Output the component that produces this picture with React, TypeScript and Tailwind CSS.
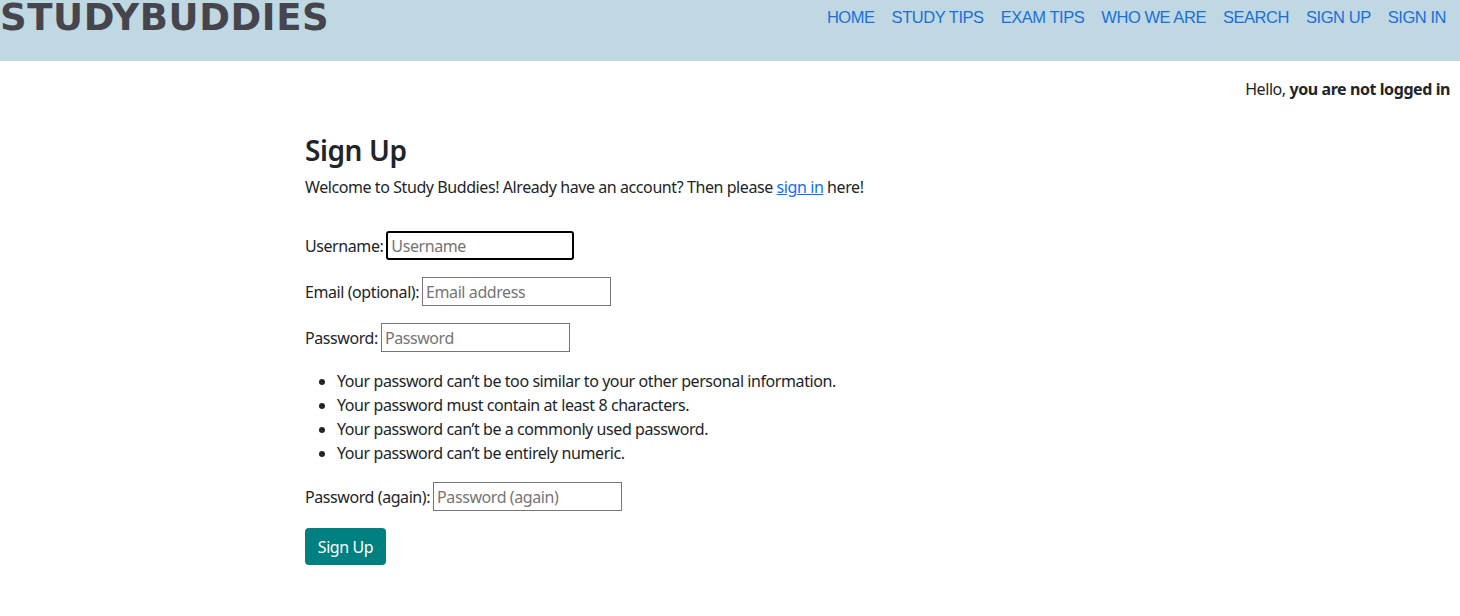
import React from 'react';

const navLinks = ['HOME', 'STUDY TIPS', 'EXAM TIPS', 'WHO WE ARE', 'SEARCH', 'SIGN UP', 'SIGN IN'];

const rules = [
  'Your password can’t be too similar to your other personal information.',
  'Your password must contain at least 8 characters.',
  'Your password can’t be a commonly used password.',
  'Your password can’t be entirely numeric.',
];

const Field: React.FC<{ label: string; placeholder: string; type?: string; focused?: boolean }> = ({
  label,
  placeholder,
  type = 'text',
  focused,
}) => (
  <p className="flex items-center h-[29px]">
    <label>{label}</label>
    <input
      type={type}
      placeholder={placeholder}
      className={
        focused
          ? 'ml-[3px] w-[188px] h-[29px] px-[3px] border-2 border-black rounded-[3px] outline-none placeholder:text-[#757575]'
          : 'ml-[3px] w-[189px] h-[29px] px-[3px] border border-[#767676] outline-none placeholder:text-[#757575]'
      }
    />
  </p>
);

export default function App() {
  return (
    <div className="min-h-[616px] bg-white text-[#212529] font-['Noto_Sans',sans-serif] text-[16px] tracking-[-0.42px]">
      {/* header */}
      <header className="h-[61px] bg-[#bfd8e2] flex items-start justify-between overflow-hidden">
        <h1 className="-mt-[5px] font-['DejaVu_Sans',sans-serif] font-bold text-[37px] leading-[46px] text-[#46454d] tracking-[0.6px]">
          STUDYBUDDIES
        </h1>
        <nav className="flex gap-[17px] pr-[14px] pt-[5px] font-['Liberation_Sans',sans-serif] text-[16.5px] tracking-[-0.45px] text-[#1a6fdb]">
          {navLinks.map((l) => (
            <a key={l} href="#">
              {l}
            </a>
          ))}
        </nav>
      </header>

      <div className="flex justify-end pr-[10px] pt-[16px]">
        <p>
          Hello, <b>you are not logged in</b>
        </p>
      </div>

      <main className="w-[850px] ml-[305px] pt-[31px]">
        <h2 className="text-[28px] font-semibold leading-[36px]">Sign Up</h2>
        <p className="mt-[7px]">
          Welcome to Study Buddies! Already have an account? Then please{' '}
          <a href="#" className="text-[#0d6efd] underline">
            sign in
          </a>{' '}
          here!
        </p>

        <form className="mt-[32px] flex flex-col">
          <Field label="Username:" placeholder="Username" focused />
          <div className="mt-[17px]">
            <Field label="Email (optional):" placeholder="Email address" type="email" />
          </div>
          <div className="mt-[17px]">
            <Field label="Password:" placeholder="Password" type="password" />
          </div>
          <ul className="mt-[17px] list-disc pl-[32px] leading-[24px]">
            {rules.map((r) => (
              <li key={r}>{r}</li>
            ))}
          </ul>
          <div className="mt-[17px]">
            <Field label="Password (again):" placeholder="Password (again)" type="password" />
          </div>
          <div className="mt-[17px]">
            <button type="button" className="w-[81px] h-[37px] bg-[#008080] text-white rounded-[4px]">
              Sign Up
            </button>
          </div>
        </form>
      </main>
    </div>
  );
}
